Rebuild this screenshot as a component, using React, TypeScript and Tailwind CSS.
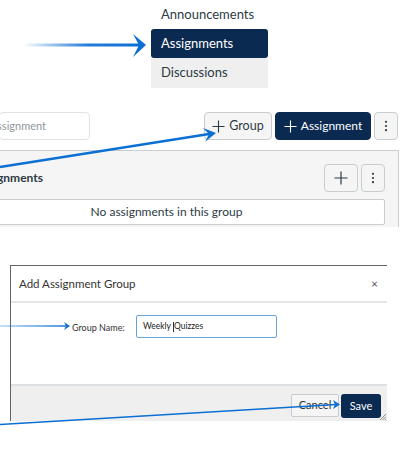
import React from 'react';

const navy = 'bg-[#0b2a51]';

function PlusIcon({ size = 13, className = '' }: { size?: number; className?: string }) {
  return (
    <svg width={size} height={size} viewBox="0 0 14 14" className={className} fill="none" stroke="currentColor" strokeWidth="1.2">
      <path d="M7 0.5V13.5M0.5 7H13.5" />
    </svg>
  );
}

function Kebab() {
  return (
    <svg width="4" height="12" viewBox="0 0 4 12" fill="currentColor">
      <circle cx="2" cy="1.8" r="1.1" />
      <circle cx="2" cy="6" r="1.1" />
      <circle cx="2" cy="10.2" r="1.1" />
    </svg>
  );
}

// annotation arrows drawn over the composite
function Arrows() {
  return (
    <svg className="absolute inset-0 pointer-events-none" width="414" height="453" viewBox="0 0 414 453">
      <defs>
        <linearGradient id="fadeA" x1="23" y1="0" x2="140" y2="0" gradientUnits="userSpaceOnUse">
          <stop offset="0" stopColor="#0b6fd3" stopOpacity="0" />
          <stop offset="0.55" stopColor="#0b6fd3" stopOpacity="0.9" />
          <stop offset="1" stopColor="#0b6fd3" />
        </linearGradient>
        <linearGradient id="fadeC" x1="0" y1="0" x2="70" y2="0" gradientUnits="userSpaceOnUse">
          <stop offset="0" stopColor="#0b6fd3" stopOpacity="0.3" />
          <stop offset="1" stopColor="#0b6fd3" />
        </linearGradient>
      </defs>
      <path d="M23 45H140" stroke="url(#fadeA)" strokeWidth="3" />
      <polygon points="133,34 146,45 133,57 139,45" fill="#0b6fd3" />

      <path d="M0 167L209 134" stroke="#0b6fd3" strokeWidth="2.5" />
      <polygon points="203,127.9 216,133 205.2,141.8 209,134.1" fill="#0b6fd3" />

      <path d="M0 326H67" stroke="url(#fadeC)" strokeWidth="1.3" />
      <polygon points="64,322 70,326 64,330 66,326" fill="#0b6fd3" />

      <path d="M0 424.5L336 404.5" stroke="#0b6fd3" strokeWidth="1.3" />
      <polygon points="333,400 340,404.5 333,409 335,404.5" fill="#0b6fd3" />
    </svg>
  );
}

export default function App() {
  return (
    <div className="relative w-[414px] h-[453px] overflow-hidden bg-white font-['Lato','Liberation_Sans',sans-serif] text-[#2d3b45]">
      {/* course nav */}
      <nav className="ml-[151px] w-[117px] flex flex-col text-[13px]">
        <div className="h-[29px] flex items-center pl-[10px]">Announcements</div>
        <div className={`h-[29px] flex items-center pl-[10px] rounded-[3px] text-white ${navy}`}>Assignments</div>
        <div className="h-[30px] flex items-center pl-[10px] bg-[#efefef]">Discussions</div>
      </nav>

      {/* toolbar */}
      <div className="mt-[24px] flex items-center h-[28px]">
        <div className="w-[91px] h-[28px] -ml-[1px] flex items-center justify-end pr-[43px] bg-white border border-[#dfe3e6] rounded-[4px] text-[11px] text-[#8e969c] whitespace-nowrap overflow-hidden">
          Search for Assignment
        </div>
        <div className="flex-1" />
        <button className="w-[68px] h-[28px] flex items-center justify-center gap-[4px] bg-[#f5f5f5] border border-[#c7cdd1] rounded-[4px] text-[12.5px]">
          <PlusIcon size={13} />
          Group
        </button>
        <button className={`ml-[3px] w-[96px] h-[28px] flex items-center justify-center gap-[4px] ${navy} border border-[#0b2a51] rounded-[4px] text-white text-[12px]`}>
          <PlusIcon size={13} />
          Assignment
        </button>
        <button className="ml-[3px] mr-[16px] w-[24px] h-[28px] flex items-center justify-center bg-[#f5f5f5] border border-[#c7cdd1] rounded-[4px]">
          <Kebab />
        </button>
      </div>

      {/* assignment group panel */}
      <div className="mt-[10px] -ml-[65px] w-[464px] h-[77px] bg-[#f5f5f5] border-t border-r border-[#c7cdd1] pl-[13px] pr-[13px] pt-[13px]">
        <div className="flex items-center h-[28px]">
          <div className="w-[95px] flex justify-end whitespace-nowrap overflow-hidden font-bold text-[12px]">Assignments</div>
          <div className="flex-1" />
          <button className="w-[34px] h-[28px] flex items-center justify-center bg-[#f5f5f5] border border-[#c7cdd1] rounded-[4px]">
            <PlusIcon size={14} />
          </button>
          <button className="ml-[3px] w-[24px] h-[28px] flex items-center justify-center bg-[#f5f5f5] border border-[#c7cdd1] rounded-[4px]">
            <Kebab />
          </button>
        </div>
        <div className="mt-[7px] h-[26px] flex items-center justify-center bg-white border border-[#c7cdd1] rounded-[2px] text-[12px]">
          No assignments in this group
        </div>
      </div>

      {/* add group dialog */}
      <div className="mt-[38px] ml-[10px] w-[377px] flex flex-col border-t border-l border-[#5f6468] text-[#333]">
        <div className="h-[37px] flex items-center justify-between pl-[8px] pr-[9px] border-b-2 border-[#e3e6e8] text-[11.5px]">
          <span>Add Assignment Group</span>
          <span className="text-[12px] text-[#555]">×</span>
        </div>
        <div className="h-[81px] flex items-start pt-[12px]">
          <label className="ml-[61px] mt-[6px] w-[53px] whitespace-nowrap text-[9px] text-[#333]">Group Name:</label>
          <div className="ml-[11px] w-[141px] h-[23px] flex items-center pl-[6px] border border-[#66a3e0] rounded-[2px] text-[8.5px] text-[#222]">
            <span className="whitespace-pre">Weekly </span>
            <span className="inline-block w-px h-[10px] bg-[#333]" />
            <span>Quizzes</span>
          </div>
        </div>
        <div className="relative h-[37px] flex items-start justify-end gap-[2px] pt-[8px] pr-[6px] bg-[#efefef] border-t-2 border-[#dde1e3] text-[11px]">
          <button className="w-[48px] h-[23px] flex items-center justify-center bg-[#f5f5f5] border border-[#c7cdd1] rounded-[2px] text-[#333]">
            Cancel
          </button>
          <button className={`w-[40px] h-[24px] flex items-center justify-center ${navy} rounded-[3px] text-white`}>
            Save
          </button>
          <svg className="absolute right-[1px] bottom-[1px]" width="7" height="7" viewBox="0 0 7 7" stroke="#777" strokeWidth="0.8">
            <path d="M1 7L7 1M3.5 7L7 3.5M6 7L7 6" />
          </svg>
        </div>
      </div>

      <Arrows />
    </div>
  );
}
